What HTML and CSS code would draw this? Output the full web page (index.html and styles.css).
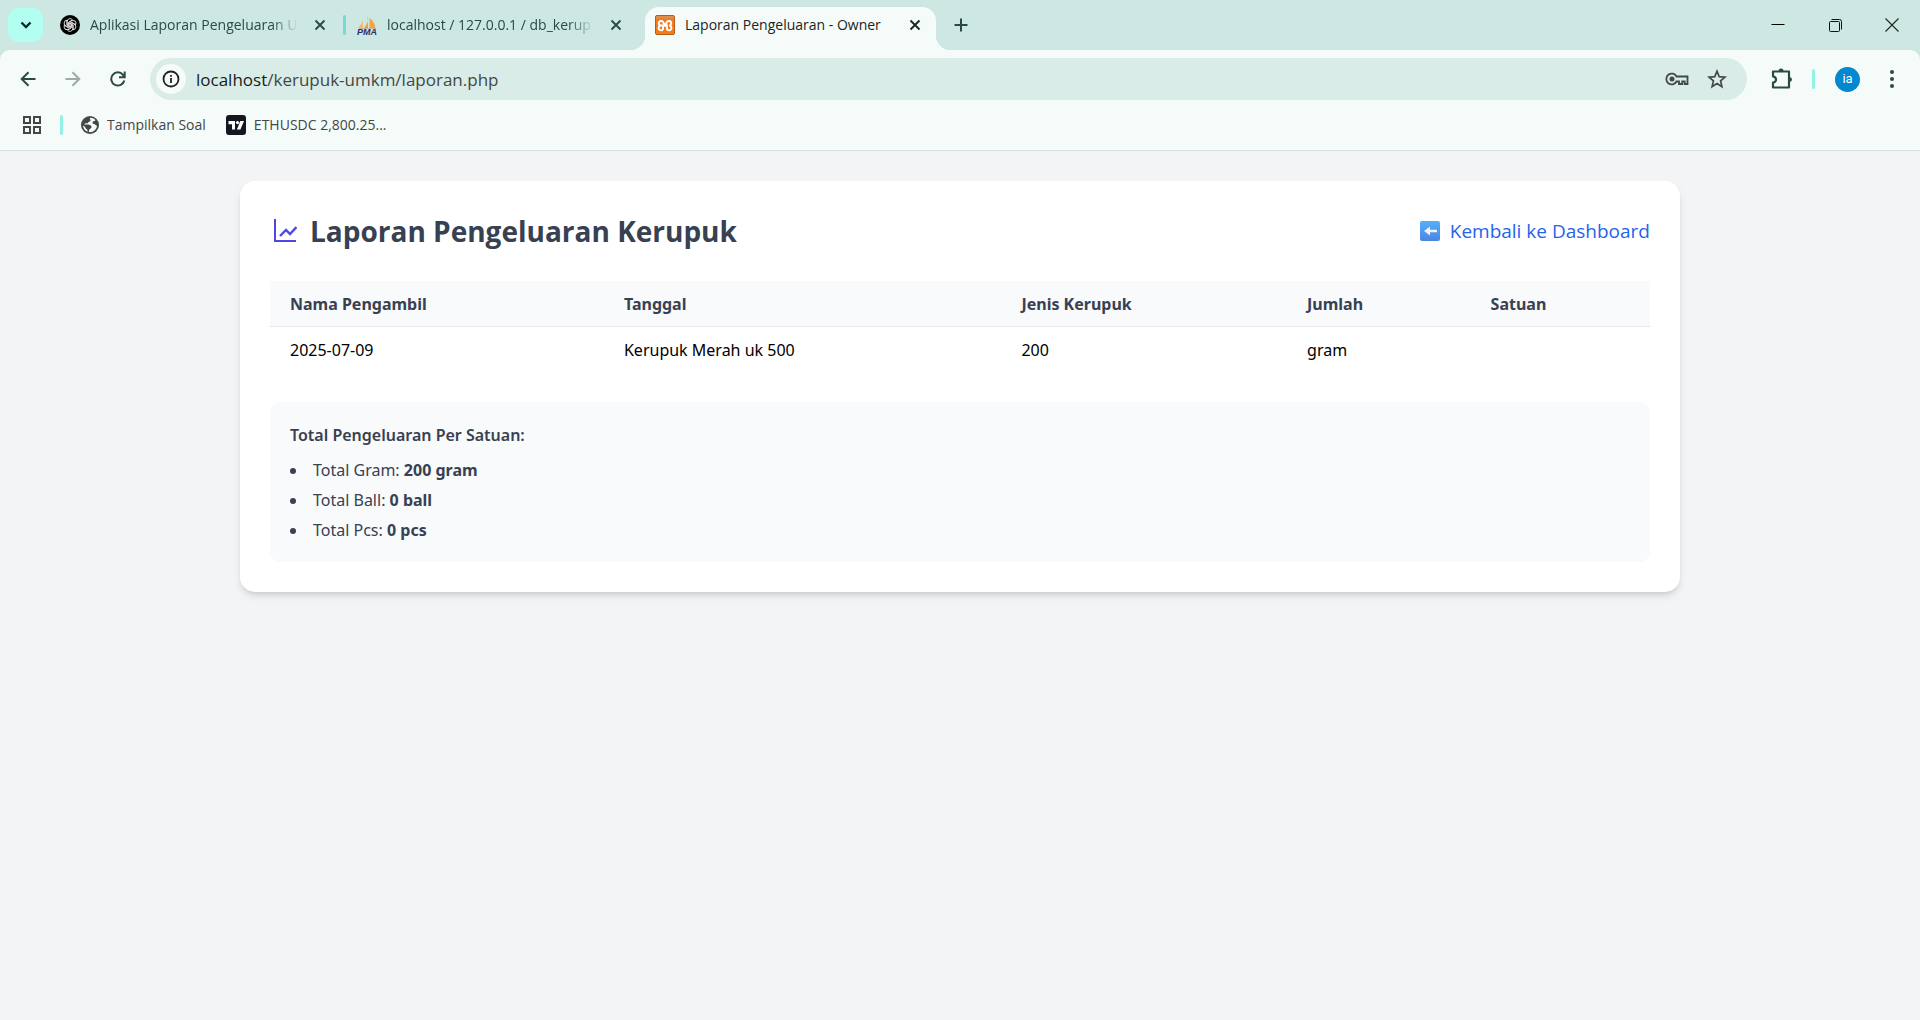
FILE: index.html
```html
<!DOCTYPE html>
<html lang="id">
<head>
<meta charset="utf-8">
<title>Laporan Pengeluaran - Owner</title>
<link rel="stylesheet" href="styles.css">
</head>
<body>
<header class="browser">
  <div class="tabstrip">
    <button class="tab-search" aria-label="Cari tab"><svg width="12" height="12" viewBox="0 0 12 12"><path d="M1.500 3.500 6 8l4.500-4.500" fill="none" stroke="#0b2b27" stroke-width="2.400"/></svg></button>
    <div class="tab">
      <svg width="20" height="20" viewBox="0 0 20 20"><circle cx="10" cy="10" r="10" fill="#000"/><g fill="none" stroke="#d8d8d8" stroke-width="1"><path id="petal" d="M10 11.800 7.200 10.200V6.500a2.900 2.900 0 0 1 5.300-1.600L9 7v3.200"/><use href="#petal" transform="rotate(60 10 10)"/><use href="#petal" transform="rotate(120 10 10)"/><use href="#petal" transform="rotate(180 10 10)"/><use href="#petal" transform="rotate(240 10 10)"/><use href="#petal" transform="rotate(300 10 10)"/></g></svg>
      <span class="tab-title fade">Aplikasi Laporan Pengeluaran U</span>
      <button class="tab-close" aria-label="Tutup"><svg width="12" height="12" viewBox="0 0 12 12"><path d="m1.500 1.500 9 9m0-9-9 9" stroke="currentColor" stroke-width="1.900"/></svg></button>
    </div>
    <span class="tab-divider"></span>
    <div class="tab tab-second">
      <svg width="20" height="20" viewBox="0 0 20 20"><path d="M5.500 3c.3 4-1.500 7.500-4.500 10h5z" fill="#f6b663"/><path d="M10.500 0c1.500 5-.5 10-3.500 13h4z" fill="#f59b23"/><path d="M12.500 3c3 2 5.500 6 6 10h-6z" fill="#f6a53a"/><path d="M2 13.500h17" stroke="#c8b4a0"/><text x="0" y="19.500" class="pma-text">PMA</text></svg>
      <span class="tab-title fade">localhost / 127.0.0.1 / db_kerup</span>
      <button class="tab-close" aria-label="Tutup"><svg width="12" height="12" viewBox="0 0 12 12"><path d="m1.500 1.500 9 9m0-9-9 9" stroke="currentColor" stroke-width="1.900"/></svg></button>
    </div>
    <div class="tab tab-active">
      <svg width="20" height="20" viewBox="0 0 20 20"><rect x=".5" y=".5" width="19" height="19" rx="1.500" fill="#f47a20" stroke="#bb5c14"/><path d="M1 1h18v2.500H1z" fill="#d9904f"/><path d="M8 10.500H6A2.300 2.300 0 1 1 8.300 7.500L10 10.500h0L11.700 7.500A2.300 2.300 0 1 1 14.300 10.500A2.400 2.400 0 1 1 12 14.200V10.500H8V14.200A2.400 2.400 0 1 1 6 10.500" fill="none" stroke="#fff" stroke-width="1.900"/></svg>
      <span class="tab-title">Laporan Pengeluaran - Owner</span>
      <button class="tab-close" aria-label="Tutup"><svg width="12" height="12" viewBox="0 0 12 12"><path d="m1.500 1.500 9 9m0-9-9 9" stroke="currentColor" stroke-width="1.900"/></svg></button>
    </div>
    <button class="new-tab" aria-label="Tab baru"><svg width="14" height="14" viewBox="0 0 14 14"><path d="M7 .5v13M.5 7h13" stroke="#2c4a45" stroke-width="2"/></svg></button>
    <div class="window-controls">
      <button aria-label="Kecilkan"><svg width="14" height="14" viewBox="0 0 14 14"><path d="M.5 6.500h13" stroke="#000"/></svg></button>
      <button aria-label="Pulihkan"><svg width="14" height="14" viewBox="0 0 14 14" fill="none" stroke="#111"><rect x="1.500" y="3.500" width="10" height="10" rx="1"/><path d="M3.500 1.500h8q2 0 2 2v8"/></svg></button>
      <button aria-label="Tutup jendela"><svg width="14" height="14" viewBox="0 0 14 14"><path d="m.5.500 13 13m0-13-13 13" stroke="#222" stroke-width="1.100"/></svg></button>
    </div>
  </div>

  <div class="toolbar">
    <div class="nav">
      <button aria-label="Kembali"><svg width="16" height="16" viewBox="0 0 16 16" fill="none" stroke="#2c4a45" stroke-width="2"><path d="M15.500 8H2M8.500 1.200 1.700 8l6.800 6.800"/></svg></button>
      <button aria-label="Maju"><svg width="16" height="16" viewBox="0 0 16 16" fill="none" stroke="#9fa9a7" stroke-width="2"><path d="M.5 8H14M7.500 1.200 14.300 8l-6.800 6.800"/></svg></button>
      <button aria-label="Muat ulang"><svg width="16" height="16" viewBox="0 0 16 16" fill="none" stroke="#2c4a45" stroke-width="2"><path d="M14.300 9.500A6.600 6.600 0 1 1 13 3.800L14.500 5.500M14.700.5v5.700H9"/></svg></button>
    </div>
    <div class="address">
      <button class="site-info" aria-label="Info situs"><svg width="18" height="18" viewBox="0 0 18 18"><circle cx="9" cy="9" r="7.500" fill="none" stroke="#222" stroke-width="1.800"/><path d="M9 8v5M9 5v1.800" stroke="#222" stroke-width="1.800"/></svg></button>
      <label class="host" for="url">localhost</label><input id="url" class="url" type="text" value="/kerupuk-umkm/laporan.php">
      <button aria-label="Sandi"><svg width="24" height="16" viewBox="0 0 24 16" fill="none" stroke="#414846" stroke-width="2"><path d="M11.500 5.500H22.500V13h-2.800v-2.500h-2.500V13h-3.200v-2.500h-2.500A5.400 5.400 0 1 1 11.500 5.500z" stroke-width="1.800"/><circle cx="7" cy="8" r="2.500" fill="#414846" stroke="none"/></svg></button>
      <button aria-label="Tandai"><svg width="20" height="20" viewBox="0 0 20 20"><path d="m10 2.200 2.200 5.400 5.800.5-4.400 3.800 1.300 5.700-4.900-3-4.900 3 1.300-5.700L2 8.100l5.800-.5z" fill="none" stroke="#414846" stroke-width="1.700"/></svg></button>
    </div>
    <button class="extensions" aria-label="Ekstensi"><svg width="22" height="22" viewBox="0 0 22 22"><path d="M3 3.500h16v16H3v-4.800q3-.6 3-3.200t-3-3.200z" fill="none" stroke="#2c4a45" stroke-width="2.200" stroke-linejoin="round"/><path d="M8.500 3a2.500 2.500 0 0 1 5 0zM19.500 9a2.500 2.500 0 0 1 0 5z" fill="#2c4a45"/></svg></button>
    <span class="divider"></span>
    <button class="avatar">ia</button>
    <button class="more" aria-label="Menu"><svg width="6" height="20" viewBox="0 0 6 20" fill="#2c4a45"><circle cx="3" cy="3" r="2"/><circle cx="3" cy="10" r="2"/><circle cx="3" cy="17" r="2"/></svg></button>
  </div>

  <nav class="bookmarks">
    <button aria-label="Aplikasi"><svg width="18" height="18" viewBox="0 0 18 18" fill="none" stroke="#414846" stroke-width="2"><path d="M1 1h6v6H1zM11 1h6v6h-6zM1 11h6v6H1zM11 11h6v6h-6z"/></svg></button>
    <span class="divider"></span>
    <a class="bookmark" href="#"><svg width="18" height="18" viewBox="0 0 18 18"><circle cx="9" cy="9" r="9" fill="#414846"/><path d="M9 1.800c-.5 1.700 1 1.800.4 3.200-.6 1-2.400.6-2.400 2.200H4.500L3 8.500c3 0 7-.5 7.500 2.200.3 2-2 1.500-2.300 3.200l-.4 2.200c4 .8 8-2.300 8.200-6.300-1.200 0-1.500-1.800-3-1.800-1.300 0-2-1-1-2.300 1-1 2.200-.3 2.400-1.600C13 2.600 11 1.700 9 1.800zM2 9.500c.2 3 2 5.400 4.500 6.200.3-1.700-.3-2.500-1.500-3-.8-1.600-1.500-2.500-3-3.200z" fill="#f5fbf9"/></svg>Tampilkan Soal</a>
    <a class="bookmark" href="#"><svg width="20" height="20" viewBox="0 0 20 20"><rect width="20" height="20" rx="3" fill="#131722"/><path d="M2.500 6H9v8.500H6V9.300H2.500zM14.300 6h3.700l-3.600 8.500h-3.500z" fill="#fff"/><circle cx="11.500" cy="7.600" r="1.600" fill="#fff"/></svg>ETHUSDC 2,800.25...</a>
  </nav>
</header>

<main class="page">
  <section class="card">
    <div class="card-head">
      <h1><svg width="24" height="24" viewBox="0 0 24 24" fill="none" stroke="#4f46e5" stroke-width="2"><path d="M2 0v22h21"/><path d="m7 17 6-6 4 4 6.500-7" stroke-width="2.400"/></svg>Laporan Pengeluaran Kerupuk</h1>
      <a class="back" href="#"><svg width="20" height="20" viewBox="0 0 20 20"><defs><linearGradient id="key" x1="0" y1="0" x2="0" y2="1"><stop offset="0" stop-color="#55b0f8"/><stop offset="1" stop-color="#4a86e0"/></linearGradient></defs><rect width="20" height="20" rx="2" fill="url(#key)"/><path d="M10 5.500 4 10l6 4.500v-3.200h7V8.700h-7z" fill="#f4efff"/></svg>Kembali ke Dashboard</a>
    </div>
    <table class="report">
      <colgroup><col class="col-name"><col class="col-date"><col class="col-kind"><col class="col-amount"><col></colgroup>
      <thead><tr><th scope="col">Nama Pengambil</th><th scope="col">Tanggal</th><th scope="col">Jenis Kerupuk</th><th scope="col">Jumlah</th><th scope="col">Satuan</th></tr></thead>
      <tbody><tr><td>2025-07-09</td><td>Kerupuk Merah uk 500</td><td>200</td><td>gram</td><td></td></tr></tbody>
    </table>
    <div class="summary">
      <h2>Total Pengeluaran Per Satuan:</h2>
      <ul>
        <li>Total Gram: <strong>200 gram</strong></li>
        <li>Total Ball: <strong>0 ball</strong></li>
        <li>Total Pcs: <strong>0 pcs</strong></li>
      </ul>
    </div>
  </section>
</main>
</body>
</html>
```
FILE: styles.css
```css
* { box-sizing: border-box; }
body {
  margin: 0;
  min-height: 100vh;
  background: #f3f4f6;
  color: #000;
  font: 16px/25px "Open Sans", "Noto Sans", sans-serif;
}
button {
  display: flex;
  align-items: center;
  justify-content: center;
  flex: none;
  padding: 0;
  border: 0;
  background: none;
  font: inherit;
  color: inherit;
}
a { text-decoration: none; }
svg { flex: none; display: block; }

/* Browser frame */
.browser { background: #cde8e2; border-bottom: 1px solid #d5e1df; }
.tabstrip { display: flex; align-items: center; height: 50px; padding-left: 8px; font-size: 14px; line-height: 20px; }
.tab-search { width: 35px; height: 34px; border-radius: 11px; background: #b2fff2; }
.tab {
  display: flex;
  align-items: center;
  width: 300px;
  height: 36px;
  padding: 0 11px 0 17px;
  gap: 10px;
  color: #2c4a45;
}
.tab-title { flex: 1; white-space: nowrap; }
.fade { -webkit-mask-image: linear-gradient(90deg, #000 calc(100% - 26px), transparent); mask-image: linear-gradient(90deg, #000 calc(100% - 26px), transparent); }
.tab-close { width: 24px; height: 24px; }
.tab-divider { width: 3px; height: 20px; border-radius: 2px; background: #75dccf; }
.tab-second { width: 299px; padding: 0 17px 0 11px; }
.tab-active {
  position: relative;
  align-self: flex-end;
  width: 291px;
  height: 43px;
  padding: 0 9px 7px 10px;
  border-radius: 14px 14px 0 0;
  background: #f5fbf9;
  color: #1b2523;
}
.tab-active::before, .tab-active::after { content: ""; position: absolute; bottom: 0; width: 14px; height: 14px; }
.tab-active::before { right: 100%; background: radial-gradient(circle at 0 0, transparent 14px, #f5fbf9 14px); }
.tab-active::after { left: 100%; background: radial-gradient(circle at 100% 0, transparent 14px, #f5fbf9 14px); }
.new-tab { width: 34px; height: 34px; margin-left: 8px; }
.window-controls { display: flex; margin-left: auto; }
.window-controls button { width: 57px; height: 48px; }
.pma-text { font: italic bold 9px "Liberation Sans", sans-serif; fill: #2e2c66; }

.toolbar { display: flex; align-items: center; height: 58px; padding: 0 13px; background: #f5fbf9; border-radius: 10px 10px 0 0; }
.nav { display: flex; gap: 15px; width: 137px; }
.nav button { width: 30px; height: 30px; }
.address { display: flex; align-items: center; flex: 1; min-width: 0; height: 42px; padding: 0 20px 0 6px; border-radius: 21px; background: #daece7; font-size: 17px; }
.site-info { width: 30px; height: 30px; margin-right: 10px; border-radius: 50%; background: #f5fbf9; }
.host { color: #151d1b; }
.url { flex: 1; min-width: 0; padding: 0; border: 0; background: none; font: inherit; color: #414846; }
.address button + button { margin-left: 18px; }
.extensions { width: 24px; height: 24px; margin-left: 22px; }
.divider { flex: none; width: 3px; height: 20px; border-radius: 2px; background: #94f2e4; }
.toolbar .divider { margin: 0 20px 0 19px; }
.avatar { width: 25px; height: 25px; border-radius: 50%; background: #0288d1; color: #fff; font: 13px/20px Roboto, sans-serif; }
.more { width: 20px; height: 24px; margin-left: 22px; margin-right: 5px; }

.bookmarks { display: flex; align-items: center; height: 42px; padding: 0 23px 8px; background: #f5fbf9; font-size: 14px; line-height: 20px; }
.bookmarks .divider { margin: 0 18px 0 19px; }
.bookmark { display: flex; align-items: center; gap: 8px; margin-right: 20px; color: #414846; }

/* Report page */
.page { padding: 30px; font-family: "Noto Sans", "Open Sans", sans-serif; }
.card {
  max-width: 1440px;
  margin: 0 auto;
  padding: 30px;
  border-radius: 15px;
  background: #fff;
  box-shadow: 0 5px 8px -1px rgba(0, 0, 0, .1), 0 3px 5px -2px rgba(0, 0, 0, .1);
}
.card-head { display: flex; align-items: center; justify-content: space-between; margin-bottom: 30px; font-family: "Open Sans", sans-serif; }
h1 { display: flex; align-items: center; gap: 13px; margin: 0; padding-left: 3px; font-size: 28px; line-height: 40px; font-weight: 700; color: #374151; }
.back { display: flex; align-items: center; gap: 10px; font-size: 19px; color: #2563eb; }
.report { width: 100%; table-layout: fixed; border-collapse: collapse; text-align: left; }
.report th, .report td { height: 45px; padding: 11px 20px 9px; }
.report thead { background: #f9fafb; color: #374151; }
.report thead tr { border-bottom: 1px solid #e5e7eb; }
.col-name { width: 24.2%; }
.col-date { width: 28.8%; }
.col-kind { width: 20.7%; }
.col-amount { width: 13.3%; }
.summary { margin-top: 30px; padding: 21px 20px 19px; border-radius: 10px; background: #f9fafb; color: #374151; }
.summary h2 { margin: 0 0 10px; font-size: 16px; line-height: 25px; font-weight: 600; }
.summary ul { display: grid; gap: 5px; margin: 0; padding: 0; list-style: disc inside; }
```
